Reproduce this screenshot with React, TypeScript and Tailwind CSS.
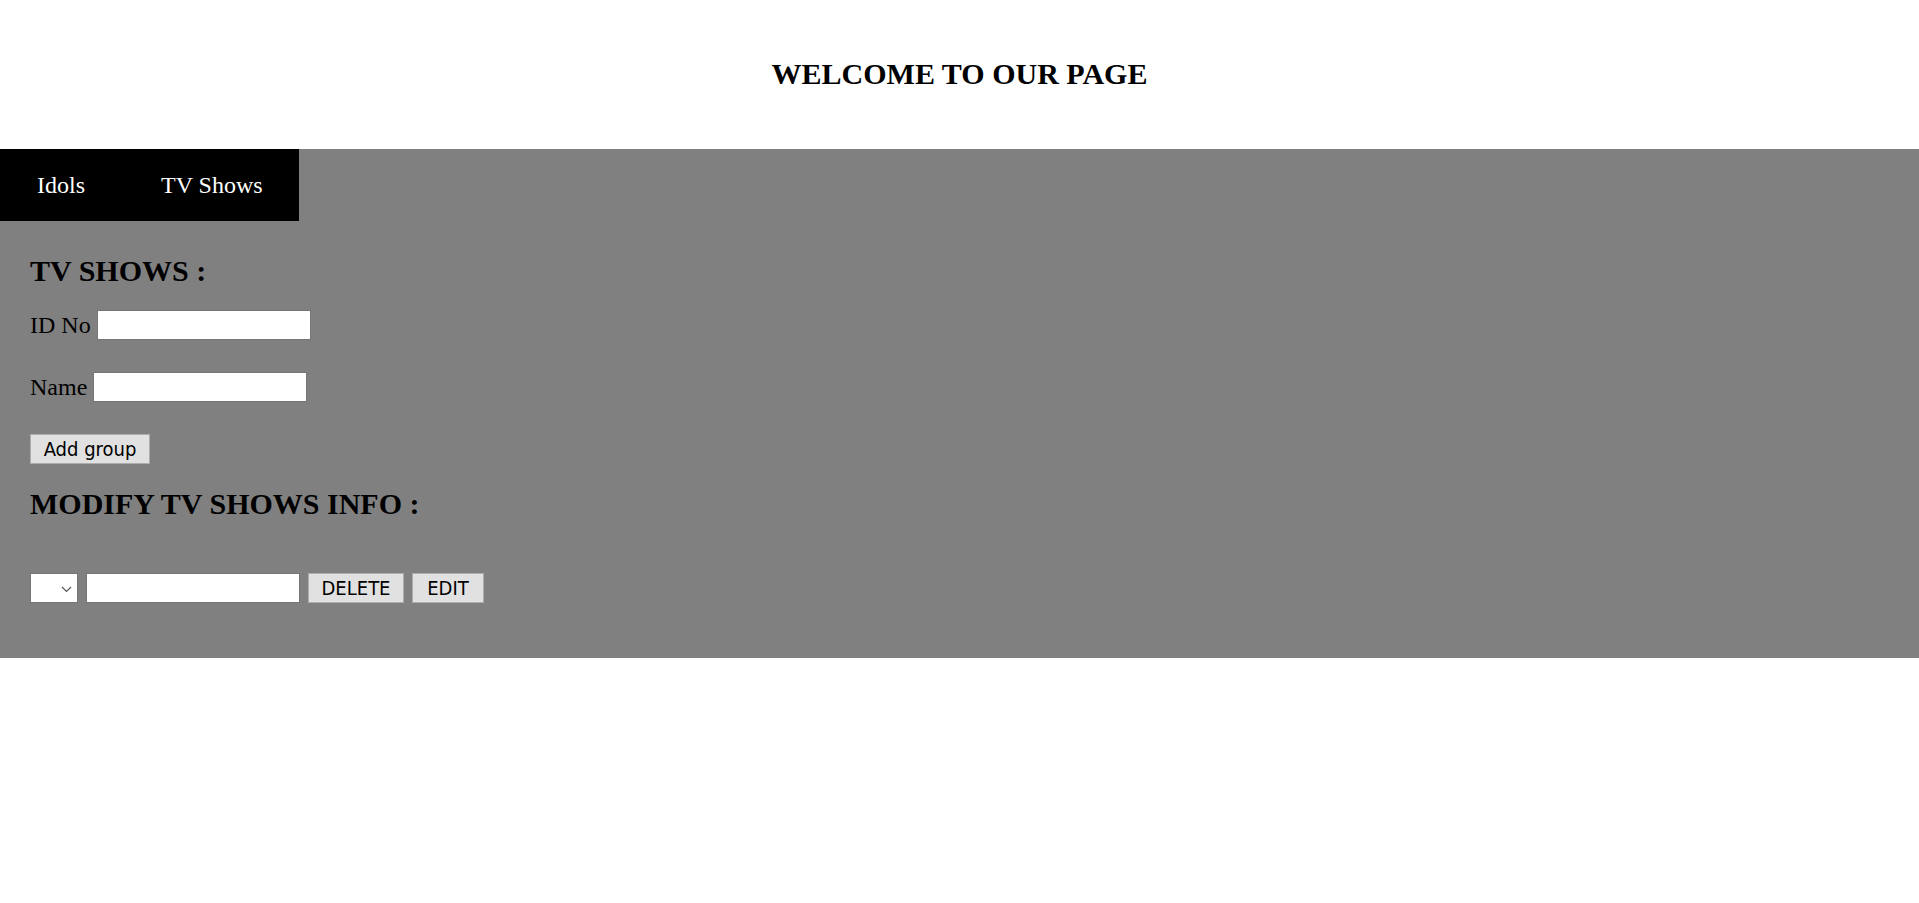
import React from "react";

const serif = { fontFamily: '"Liberation Serif", "Times New Roman", serif' };

function Field({ label }: { label: string }) {
  return (
    <div className="flex items-center gap-[6px] h-[30px]">
      <span className="text-[24px] leading-[28px] text-black">{label}</span>
      <input
        type="text"
        className="w-[214px] h-[30px] bg-white border border-[#767676] outline-none"
      />
    </div>
  );
}

const btnFont = { fontFamily: '"DejaVu Sans Condensed", Tahoma, "Liberation Sans", sans-serif' };

export default function App() {
  return (
    <div className="min-h-[903px] bg-white text-black" style={serif}>
      <header className="h-[149px] pt-[57px]">
        <h2 className="text-center text-[30px] leading-[34px] font-bold">WELCOME TO OUR PAGE</h2>
      </header>
      <section className="bg-[#808080] h-[509px]">
        <nav className="bg-black w-[299px] h-[72px] flex items-center pl-[37px] gap-[76px] text-white text-[24px] leading-[28px]">
          <a href="#" className="text-white">Idols</a>
          <a href="#" className="text-white">TV Shows</a>
        </nav>
        <div className="pl-[30px]">
          <h2 className="mt-[33px] text-[30px] leading-[34px] font-bold">TV SHOWS :</h2>
          <div className="mt-[22px]">
            <Field label="ID No" />
          </div>
          <div className="mt-[32px]">
            <Field label="Name" />
          </div>
          <button
            className="mt-[32px] w-[120px] h-[30px] bg-[#e1e1e1] border border-[#adadad] text-[20px] leading-[28px] text-black flex items-center justify-center"
            style={btnFont}
          >
            Add group
          </button>
          <h2 className="mt-[23px] text-[30px] leading-[34px] font-bold">MODIFY TV SHOWS INFO :</h2>
          <div className="mt-[52px] flex items-center gap-[8px]">
            <div className="relative w-[48px] h-[30px] bg-white border border-[#767676]">
              <svg
                className="absolute left-[30px] top-[12px]"
                width="11"
                height="7"
                viewBox="0 0 11 7"
                fill="none"
              >
                <path d="M1 1 L5.5 5.5 L10 1" stroke="#555" strokeWidth="1.2" />
              </svg>
            </div>
            <input
              type="text"
              className="w-[214px] h-[30px] bg-white border border-[#767676] outline-none"
            />
            <button
              className="w-[96px] h-[30px] bg-[#e1e1e1] border border-[#adadad] text-[20px] leading-[28px] text-black flex items-center justify-center"
              style={btnFont}
            >
              DELETE
            </button>
            <button
              className="w-[72px] h-[30px] bg-[#e1e1e1] border border-[#adadad] text-[20px] leading-[28px] text-black flex items-center justify-center"
              style={btnFont}
            >
              EDIT
            </button>
          </div>
        </div>
      </section>
    </div>
  );
}
